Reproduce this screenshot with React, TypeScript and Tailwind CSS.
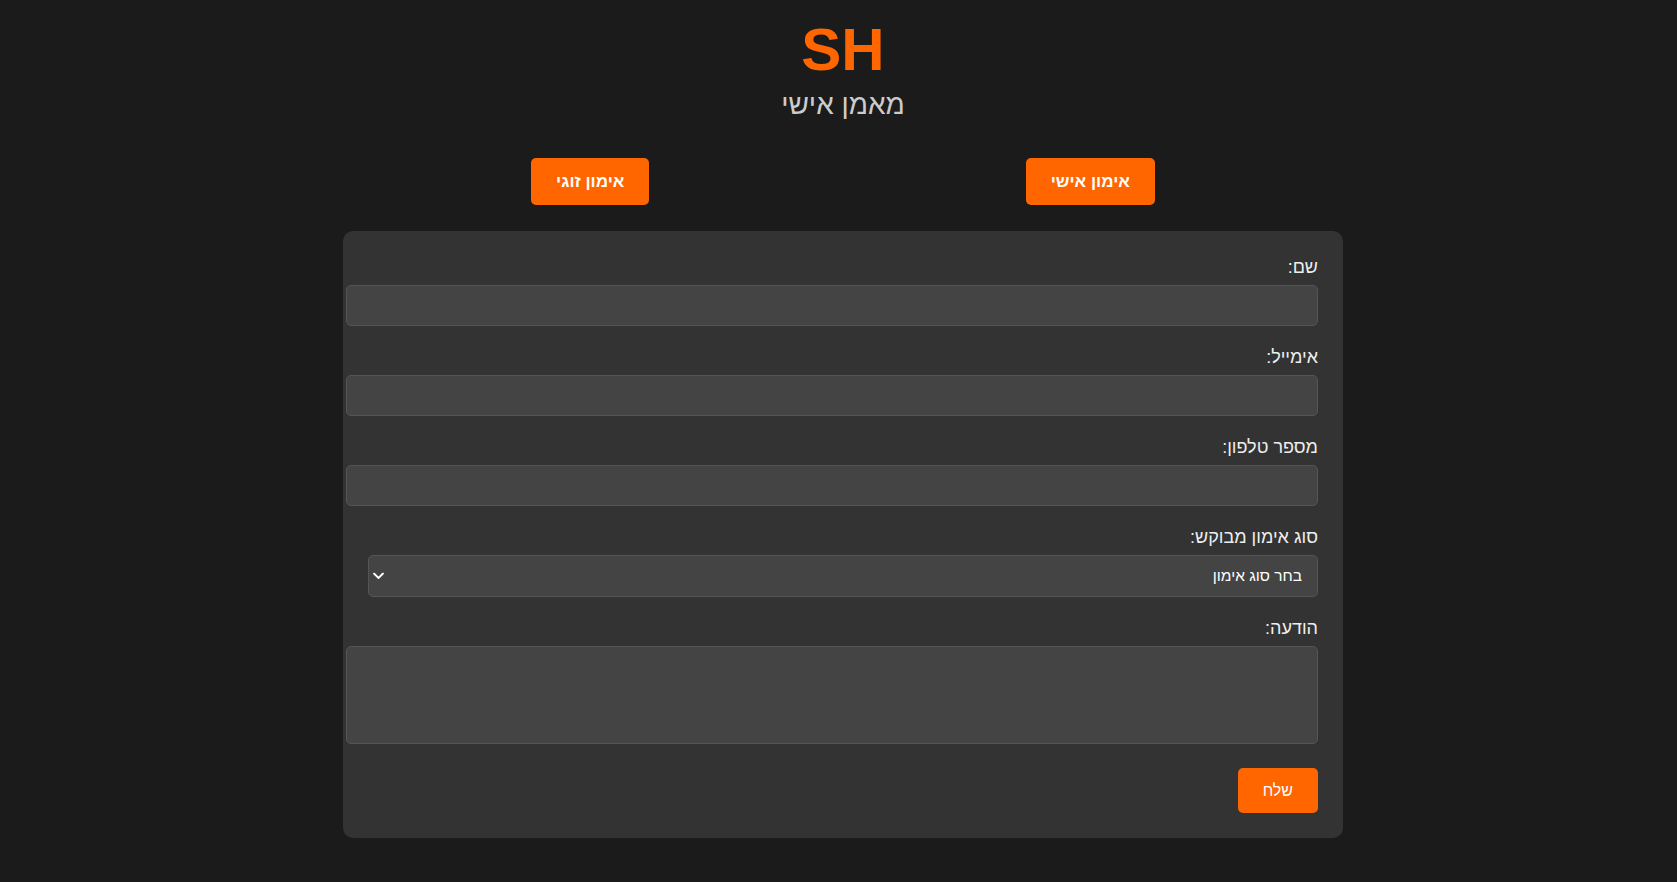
import React from 'react';

const fields = [
  { id: 'name', label: 'שם:', type: 'text' },
  { id: 'email', label: 'אימייל:', type: 'email' },
  { id: 'phone', label: 'מספר טלפון:', type: 'tel' },
];

const App = () => {
  return (
    <div
      dir="rtl"
      className="min-h-screen bg-[#1b1b1b] pl-[9px] pt-[15px] pb-10 text-[#eeeeee]"
      style={{ fontFamily: '"Liberation Sans", Arial, sans-serif' }}
    >
      <header className="text-center">
        <h1 className="text-[60px] leading-[69px] font-bold text-[#ff6600]">SH</h1>
        <p className="mt-[5px] text-[28px] leading-[32px] text-[#cccccc]">מאמן אישי</p>
      </header>

      <div className="mx-auto mt-[37px] flex w-[1000px] justify-around">
        <button className="flex h-[47px] items-center rounded-[5px] bg-[#ff6600] px-[25px] text-[17px] font-bold text-white">
          אימון אישי
        </button>
        <button className="flex h-[47px] items-center rounded-[5px] bg-[#ff6600] px-[25px] text-[17px] font-bold text-white">
          אימון זוגי
        </button>
      </div>

      <form className="mx-auto mt-[26px] w-[1000px] rounded-[10px] bg-[#333333] p-[25px]">
        {fields.map((f) => (
          <div key={f.id} className="mb-[20px]">
            <label htmlFor={f.id} className="mb-[6px] block text-[18px] leading-[23px]">
              {f.label}
            </label>
            <input
              id={f.id}
              type={f.type}
              className="box-content block h-[19px] w-full rounded-[5px] border border-[#555555] bg-[#444444] p-[10px] text-[16px] text-white outline-none"
            />
          </div>
        ))}

        <div className="mb-[20px]">
          <label htmlFor="type" className="mb-[6px] block text-[18px] leading-[23px]">
            סוג אימון מבוקש:
          </label>
          <div className="relative">
            <select
              id="type"
              className="block h-[42px] w-full appearance-none rounded-[5px] border border-[#555555] bg-[#444444] pr-[15px] pl-[30px] text-[15.5px] text-white outline-none"
            >
              <option>בחר סוג אימון</option>
              <option>אימון אישי</option>
              <option>אימון זוגי</option>
            </select>
            <svg
              className="pointer-events-none absolute left-[5px] top-1/2 -translate-y-1/2"
              width="11"
              height="7"
              viewBox="0 0 11 7"
              fill="none"
            >
              <path d="M1 1l4.5 4.5L10 1" stroke="#ffffff" strokeWidth="1.8" strokeLinecap="round" strokeLinejoin="round" />
            </svg>
          </div>
        </div>

        <div className="mb-[24px]">
          <label htmlFor="message" className="mb-[6px] block text-[18px] leading-[23px]">
            הודעה:
          </label>
          <textarea
            id="message"
            className="box-content block h-[76px] w-full resize-none rounded-[5px] border border-[#555555] bg-[#444444] p-[10px] text-[16px] text-white outline-none"
          />
        </div>

        <button
          type="button"
          className="h-[45px] rounded-[5px] bg-[#ff6600] px-[25px] text-[16px] text-white"
        >
          שלח
        </button>
      </form>
    </div>
  );
};

export default App;
